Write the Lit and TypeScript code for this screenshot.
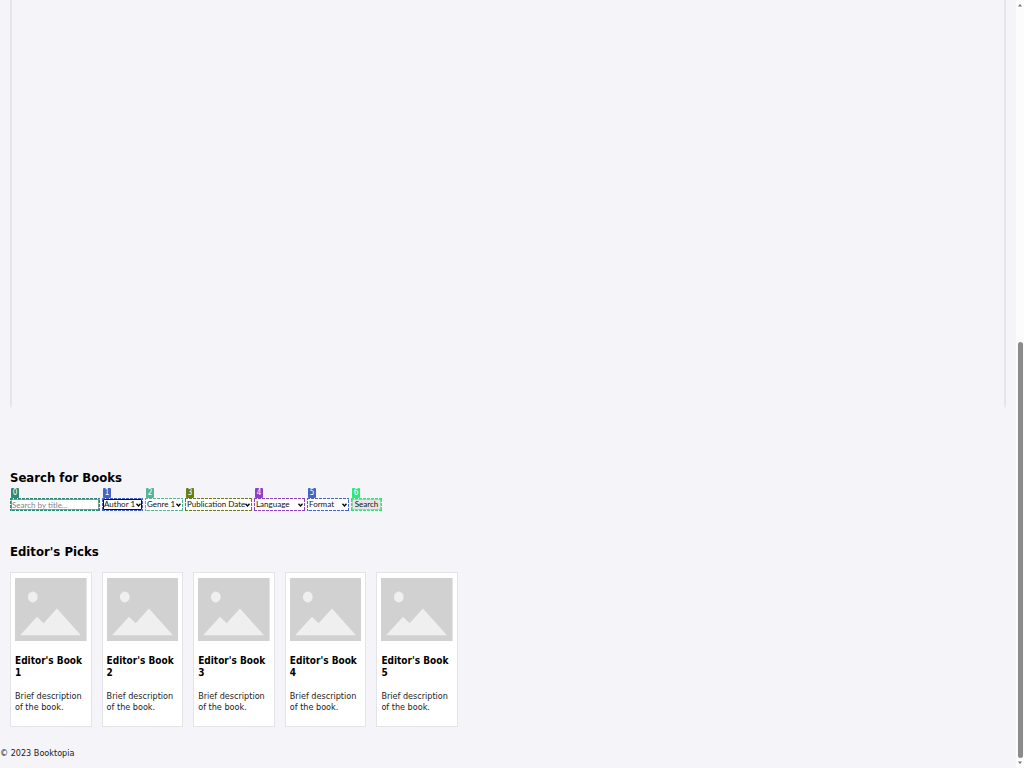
import { LitElement, html, css, svg } from "lit";
import { customElement, property } from "lit/decorators.js";
import { styleMap } from "lit/directives/style-map.js";

interface Filter {
  label: string;
  options: string[];
  width: number;
  color: string;
  focused?: boolean;
}

const FILTERS: Filter[] = [
  { label: "Author", options: ["Author 1", "Author 2"], width: 41, color: "#4763c4", focused: true },
  { label: "Genre", options: ["Genre 1", "Genre 2"], width: 38, color: "#55b592" },
  { label: "Publication Date", options: ["Publication Date"], width: 67, color: "#697d14" },
  { label: "Language", options: ["Language"], width: 51, color: "#8a41c2" },
  { label: "Format", options: ["Format"], width: 42, color: "#4763c4" },
];

@customElement("marked-field")
class MarkedField extends LitElement {
  @property() number = "";
  @property() color = "";

  static styles = css`
    :host { display: block; }
    .frame { position: relative; padding: 1px; }
    .outline {
      position: absolute; inset: 0; width: 100%; height: 100%;
      fill: none; stroke-width: 3; stroke-dasharray: 3 1; pointer-events: none;
    }
    .badge {
      position: absolute; left: 1px; top: -10px; width: 8px; height: 10px;
      border-radius: 1px; color: #fff;
      font: 8px/10px "DejaVu Sans Condensed", "DejaVu Sans", sans-serif;
      text-align: center;
    }
  `;

  render() {
    return html`<div class="frame">
      <svg class="outline" aria-hidden="true"><rect width="100%" height="100%" stroke=${this.color} /></svg>
      <slot></slot>
      <span class="badge" style=${styleMap({ background: this.color })}>${this.number}</span>
    </div>`;
  }
}

@customElement("book-card")
class BookCard extends LitElement {
  @property() name = "";

  static styles = css`
    :host { display: block; box-sizing: border-box; background: #fff; border: 1px solid #e4e4e7; padding: 5px 4px 13px; }
    .cover { display: block; width: 100%; height: 63px; }
    h3 { margin: 14px 0 12px; font-size: 10px; line-height: 12px; }
    p { margin: 0; font-size: 9px; line-height: 11px; color: #222; }
  `;

  render() {
    return html`
      <svg class="cover" viewBox="0 0 70 63" preserveAspectRatio="none" aria-hidden="true">
        ${svg`<rect width="70" height="63" fill="#d1d1d1"/>
        <ellipse cx="17.4" cy="19" rx="4.8" ry="5.4" fill="#efefef"/>
        <path d="M5 57.3 21.5 38.8 28 45.2 41 30.5 64.5 57.3Z" fill="#efefef"/>`}
      </svg>
      <h3>${this.name}</h3>
      <p>Brief description of the book.</p>
    `;
  }
}

@customElement("app-root")
class AppRoot extends LitElement {
  static styles = css`
    :host {
      display: flex; min-height: 100vh; background: #f4f4f9; color: #000;
      font-family: "DejaVu Sans Condensed", "DejaVu Sans", sans-serif;
    }
    .page { flex: 1; min-width: 0; display: flex; flex-direction: column; }
    .panel {
      flex: 1; margin: 0 10px; min-height: 200px;
      border: solid; border-width: 0 2px;
      border-image: linear-gradient(#e4e4e9 calc(100% - 6px), #f4f4f9) 2;
      border-image-width: 0 2px;
    }
    .search { padding: 61px 10px 0; }
    .picks { padding: 32px 10px 0; }
    h2 { margin: 0; font-size: 13px; line-height: 18px; }
    form { display: flex; gap: 2px; margin-top: 11px; }
    input, select, button {
      display: block; box-sizing: border-box; width: 100%; height: 11px; margin: 0;
      border: 1px solid #aaa; border-radius: 0; outline: none;
      font: 8px/9px Lato, "DejaVu Sans Condensed", sans-serif; color: #111;
    }
    .title { flex: 0 0 90px; }
    input { padding: 0; background: #fff; }
    input::placeholder { color: #858585; opacity: 1; }
    .choice { position: relative; }
    select { appearance: none; background: #fff; border-color: #fff; padding: 0; }
    select.focused { border-color: #101018; border-radius: 1px; }
    .arrow { position: absolute; right: 1px; top: 4px; width: 5px; height: 4px; fill: none; stroke: #000; stroke-width: 1.3; pointer-events: none; }
    .submit { flex: 0 0 31px; }
    button { background: #e5e5e5; border-color: #d0d0d0; padding: 0; text-align: center; }
    .cards { display: grid; grid-template-columns: repeat(5, minmax(0, 1fr)); gap: 10px; max-width: 448px; margin-top: 11px; }
    footer { padding: 20px 0 8px; font-size: 9px; line-height: 13px; color: #222; }
    .scroll { flex: 0 0 8px; display: flex; flex-direction: column; align-items: center; background: #fcfcfc; }
    .scroll svg { width: 6px; height: 4px; margin: 3px 0; fill: #777; }
    .track { flex: 1; width: 5px; display: flex; flex-direction: column; justify-content: flex-end; }
    .thumb { height: calc(100% * 5 / 9); border-radius: 3px; background: #8b8b8b; }
  `;

  render() {
    return html`
      <div class="page">
        <div class="panel"></div>
        <section class="search">
          <h2>Search for Books</h2>
          <form @submit=${(e: Event) => e.preventDefault()}>
            <marked-field class="title" number="0" color="#2d8a76">
              <input type="text" aria-label="Search by title" placeholder="Search by title..." />
            </marked-field>
            ${FILTERS.map((f, i) => html`
              <marked-field number=${i + 1} color=${f.color} style=${styleMap({ flex: `0 0 ${f.width}px` })}>
                <div class="choice">
                  <select aria-label=${f.label} class=${f.focused ? "focused" : ""}>
                    ${f.options.map((o) => html`<option>${o}</option>`)}
                  </select>
                  <svg class="arrow" viewBox="0 0 5 4" aria-hidden="true"><path d="M.5.7 2.5 3 4.5.7"/></svg>
                </div>
              </marked-field>`)}
            <marked-field class="submit" number="6" color="#2ee67a">
              <button type="submit">Search</button>
            </marked-field>
          </form>
        </section>
        <section class="picks">
          <h2>Editor's Picks</h2>
          <div class="cards">
            ${[1, 2, 3, 4, 5].map((n) => html`<book-card name=${`Editor's Book ${n}`}></book-card>`)}
          </div>
        </section>
        <footer>© 2023 Booktopia</footer>
      </div>
      <div class="scroll" aria-hidden="true">
        <svg viewBox="0 0 6 4"><path d="M1 3.5 3 1 5 3.5Z"/></svg>
        <div class="track"><div class="thumb"></div></div>
        <svg viewBox="0 0 6 4"><path d="M1 .5 3 3 5 .5Z"/></svg>
      </div>
    `;
  }
}
